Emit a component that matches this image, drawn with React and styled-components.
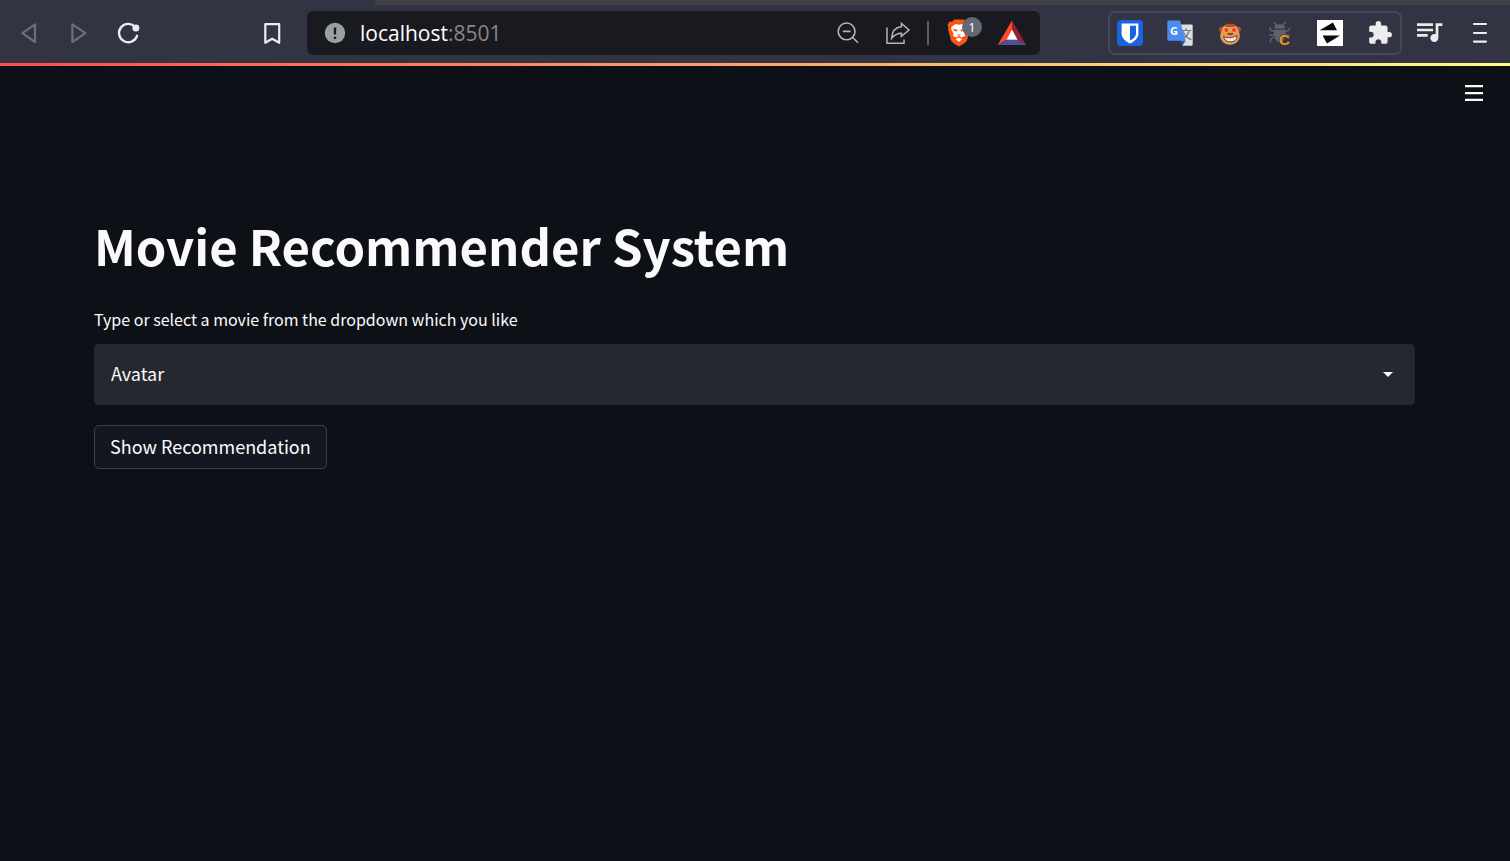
import React, { useState } from 'react';
import styled, { createGlobalStyle } from 'styled-components';
import { MdExtension } from 'react-icons/md';

const Color = {
  CHROME: '#323443',
  STRIP: '#403e47',
  FIELD: '#191a1f',
  ICON: '#ececec',
  ICON_MUTED: '#b4b4b8',
  ICON_DISABLED: '#6d6e76',
  PAGE: '#0d1117',
  TEXT: '#fafafa',
};

const BackIcon = () => (
  <svg width="24" height="24" fill="none" stroke={ Color.ICON_DISABLED } strokeWidth="2.2" strokeLinejoin="round">
    <path d="M5.4 12.2 L18 3.4 V21 Z" />
  </svg>
);

const ForwardIcon = () => (
  <svg width="24" height="24" fill="none" stroke={ Color.ICON_DISABLED } strokeWidth="2.2" strokeLinejoin="round">
    <path d="M18.4 12.2 L5.4 3.4 V21 Z" />
  </svg>
);

const ReloadIcon = () => (
  <svg width="24" height="24" fill="none" stroke={ Color.ICON } strokeWidth="2.4" strokeLinecap="round">
    <path d="M20 14.8 A9.2 9.2 0 1 1 17.6 5.4" />
    <circle cx="18.9" cy="7" r="3.5" fill={ Color.ICON } stroke="none" />
  </svg>
);

const BookmarkIcon = () => (
  <svg width="24" height="24" fill="none" stroke={ Color.ICON } strokeWidth="2.2" strokeLinejoin="round">
    <path d="M5.3 3.2 H19.2 V21.8 L12.2 17.8 L5.3 21.8 Z" />
  </svg>
);

const InfoIcon = () => (
  <svg width="22" height="22" aria-hidden="true">
    <circle cx="11" cy="11" r="10.2" fill="#9b9ea4" />
    <path d="M11 5.5 V12.5 M11 14.8 V17" stroke={ Color.FIELD } strokeWidth="2.4" />
  </svg>
);

const ZoomOutIcon = () => (
  <svg width="24" height="24" fill="none" stroke={ Color.ICON_MUTED } strokeWidth="1.6">
    <circle cx="10.6" cy="10.4" r="8.4" />
    <path d="M6.8 10.4 H14.6 M16.4 16.2 L22 21.8" />
  </svg>
);

const ShareIcon = () => (
  <svg width="26" height="24" fill="none" stroke={ Color.ICON_MUTED } strokeWidth="1.5">
    <path d="M2 6.6 V22.3 H19 V18.4" />
    <path d="M6.6 17.4 C7 10.6 10 6.4 16.4 5.8 V2.4 L24 9 L16.4 15.4 V12.2 C12 12.2 9.4 13.6 6.6 17.4 Z" />
  </svg>
);

const LionIcon = () => (
  <svg width="24" height="28" viewBox="0 0 24 28">
    <path d="M7.2 0.6 H16.8 L18.8 2.8 L21.6 2.6 L23.4 6 L22.6 8.6 L23 10 L20.2 20.8 C19.6 22.6 18.4 23.8 12 27.6 C5.6 23.8 4.4 22.6 3.8 20.8 L1 10 L1.4 8.6 L0.6 6 L2.4 2.6 L5.2 2.8 Z" fill="#fb5413" />
    <path d="M8.6 5 L12 5.8 L15.4 5 L19.2 7.6 L20 9.8 L17.4 14.4 L18 17 L14.6 18.6 L13.2 17.4 L12 17 L10.8 17.4 L9.4 18.6 L6 17 L6.6 14.4 L4 9.8 L4.8 7.6 Z M12 18.4 L15.4 20.2 L12 22.8 L8.6 20.2 Z" fill="#fff" />
    <path d="M6 9.8 L10.6 10.8 L10 12.4 L7.4 12 Z M18 9.8 L13.4 10.8 L14 12.4 L16.6 12 Z M10 15.4 H14 L12 17 Z" fill="#fb5413" />
  </svg>
);

const TriangleIcon = () => (
  <svg width="30" height="26" viewBox="0 0 30 26">
    <path d="M15 0.6 L0.6 25 L9.4 19.8 L15 9.6 Z" fill="#ff4a24" />
    <path d="M15 0.6 L29.4 25 L20.6 19.8 L15 9.6 Z" fill="#98202f" />
    <path d="M0.6 25 H29.4 L20.6 19.8 H9.4 Z" fill="#4c5196" />
    <path d="M15 9.6 L20.6 19.8 H9.4 Z" fill="#fff" />
  </svg>
);

const ShieldIcon = () => (
  <svg width="26" height="26">
    <rect width="26" height="26" rx="4" fill="#1b62dd" />
    <path d="M4.6 3.4 H21.4 V13.4 C21.4 18 17.6 21.2 13 23.4 C8.4 21.2 4.6 18 4.6 13.4 Z" fill="#fff" />
    <path d="M13 5.8 H19 V13.4 C19 16.4 16.4 18.8 13 20.6 Z" fill="#1b62dd" />
  </svg>
);

const TranslateIcon = () => (
  <svg width="26" height="26">
    <path d="M12 4.4 H24.6 Q25.7 4.4 25.7 5.5 V24.6 Q25.7 25.7 24.6 25.7 H15.4 Z" fill="#dedfe1" />
    <text x="13" y="19" fontSize="12" fontFamily="'Noto Sans CJK SC', sans-serif" fill="#5c6672">文</text>
    <path d="M1.4 0.4 H13 L18.6 20.8 H1.4 Q0.3 20.8 0.3 19.7 V1.5 Q0.3 0.4 1.4 0.4 Z" fill="#4a8cf0" />
    <path d="M13.4 20.8 H18.6 L15.4 25.7 Z" fill="#2456c0" />
    <text x="3" y="14.6" fontSize="11" fontWeight="700" fontFamily="'Open Sans', sans-serif" fill="#fff">G</text>
  </svg>
);

const MonkeyIcon = () => (
  <svg width="26" height="26">
    <circle cx="5" cy="9.4" r="2.8" fill="#a9552c" />
    <circle cx="21" cy="9.4" r="2.8" fill="#a9552c" />
    <path d="M8 1.6 L11 3 L12.4 0.8 L14 2.6 L18 1.6 L16 6.4 H9.6 Z" fill="#6c2922" />
    <path d="M13 4 C18 4 21 6.6 21 10.6 C23.2 13.4 23.4 17.4 21.8 19.8 C20 23.2 16.6 24.8 13 24.8 C9.4 24.8 6 23.2 4.2 19.8 C2.6 17.4 2.8 13.4 5 10.6 C5 6.6 8 4 13 4 Z" fill="#e8994f" />
    <path d="M7 5.6 C10 3.6 16 3.6 19 5.6 L17 7 H9 Z" fill="#a9552c" />
    <ellipse cx="9.4" cy="9.8" rx="3.2" ry="2.8" fill="#f3a866" />
    <ellipse cx="17" cy="9.8" rx="3.2" ry="2.8" fill="#f3a866" />
    <circle cx="9.4" cy="10" r="2" fill="#ee3f2c" />
    <circle cx="17" cy="10" r="2" fill="#ee3f2c" />
    <path d="M10.6 13.4 L12.2 14.4 L13.2 13.6 L14.2 14.4 L15.8 13.4" fill="none" stroke="#7a3420" strokeWidth="1.3" />
    <path d="M6.6 16.6 C10 18.4 16 18 20 15.6 C20 20 17.4 21.8 14 21.8 C10 21.8 7.6 20.4 6.6 16.6 Z" fill="#fff" stroke="#54251a" strokeWidth="0.9" />
    <path d="M10 18.2 V20.8 M13.4 18.2 V21.4 M16.6 17.6 V20.8" stroke="#b79a88" strokeWidth="0.6" />
  </svg>
);

const BugIcon = () => (
  <svg width="26" height="26">
    <g fill="none" stroke="#60626a" strokeWidth="1.5" strokeLinejoin="round">
      <path d="M6.6 2 L9.6 5.4 M18.6 2 L15.6 5.4" />
      <path d="M2.6 7.2 L4.2 10.6 L8.4 12 M23 7.2 L21.4 10.6 L17 12" />
      <path d="M2 15 H8 M6.8 17 L3.8 19 L3.4 23 M17 15 H23" />
    </g>
    <path d="M7 8.6 C7.6 5.4 10 4.2 12.7 4.2 C15.4 4.2 17.8 5.4 18.4 8.6 Z" fill="#60626a" />
    <path d="M6.8 9.8 H18.6 C19 15.6 17.4 22.6 12.7 22.6 C8 22.6 6.4 15.6 6.8 9.8 Z" fill="#60626a" />
    <text x="12" y="25" fontSize="15" fontWeight="700" fontFamily="'Liberation Sans', sans-serif" fill="#f0981b" stroke={ Color.CHROME } strokeWidth="1" paintOrder="stroke">C</text>
  </svg>
);

const SorterIcon = () => (
  <svg width="26" height="26">
    <rect width="26" height="26" fill="#fff" />
    <path d="M2.6 10.2 L16 2.6 L20 10.2 Z M5.6 15.6 H23 L10 23.4 Z" fill="#0b0b0b" />
  </svg>
);

const PlaylistIcon = () => (
  <svg width="26" height="22" viewBox="3 5 19.5 16.5" fill={ Color.ICON }>
    <path d="M15 6H3v2h12V6zm0 4H3v2h12v-2zM3 16h8v-2H3v2zM17 6v8.18c-.31-.11-.65-.18-1-.18-1.66 0-3 1.34-3 3s1.34 3 3 3 3-1.34 3-3V8h3V6h-5z" />
  </svg>
);

const MenuIcon = () => (
  <svg width="16" height="22" stroke={ Color.ICON } strokeWidth="2.2" strokeLinecap="round">
    <path d="M2 2 H14 M2 11 H14 M2 19.6 H14" />
  </svg>
);

const AppMenuIcon = () => (
  <svg width="18" height="16" fill={ Color.TEXT }>
    <path d="M0 0 H18 V2.2 H0 Z M0 7 H18 V9.2 H0 Z M0 13.8 H18 V16 H0 Z" />
  </svg>
);

const extensions = [
  { name: 'Password manager', icon: <ShieldIcon /> },
  { name: 'Translate', icon: <TranslateIcon /> },
  { name: 'Monkey', icon: <MonkeyIcon /> },
  { name: 'Bug', icon: <BugIcon /> },
  { name: 'Sorter', icon: <SorterIcon /> },
  { name: 'Extensions', icon: <MdExtension size={ 26 } /> },
];

const movies = ['Avatar', 'Spectre', 'The Dark Knight Rises', 'John Carter', 'Tangled'];

const App = () => {
  const [movie, setMovie] = useState(movies[0]);

  return (
    <Page>
      <GlobalStyle />
      <Browser>
        <TabStrip />
        <Toolbar>
          <ToolButton aria-label="Back" disabled><BackIcon /></ToolButton>
          <ToolButton aria-label="Forward" disabled><ForwardIcon /></ToolButton>
          <ToolButton aria-label="Reload"><ReloadIcon /></ToolButton>
          <BookmarkButton aria-label="Bookmark this page"><BookmarkIcon /></BookmarkButton>
          <AddressBar>
            <InfoIcon />
            <Address role="textbox" aria-label="Address" tabIndex={ 0 }>localhost<Port>:8501</Port></Address>
            <ToolButton aria-label="Zoom"><ZoomOutIcon /></ToolButton>
            <ToolButton aria-label="Share"><ShareIcon /></ToolButton>
            <Divider />
            <ShieldsButton aria-label="Shields">
              <LionIcon />
              <Badge>1</Badge>
            </ShieldsButton>
            <ToolButton aria-label="Rewards"><TriangleIcon /></ToolButton>
          </AddressBar>
          <Extensions>
            { extensions.map(({ name, icon }) => (
              <ExtensionButton key={ name } aria-label={ name }>{ icon }</ExtensionButton>
            )) }
          </Extensions>
          <ToolButton aria-label="Media"><PlaylistIcon /></ToolButton>
          <ToolButton aria-label="Menu"><MenuIcon /></ToolButton>
        </Toolbar>
      </Browser>
      <Decoration />
      <AppHeader>
        <AppMenuButton aria-label="App menu"><AppMenuIcon /></AppMenuButton>
      </AppHeader>
      <Main>
        <Title>Movie Recommender System</Title>
        <Label htmlFor="movie">Type or select a movie from the dropdown which you like</Label>
        <SelectWrap>
          <Select id="movie" value={ movie } onChange={ e => setMovie(e.target.value) }>
            { movies.map(name => <option key={ name }>{ name }</option>) }
          </Select>
          <Caret width="10" height="5" viewBox="0 0 10 5">
            <path d="M0 0 H10 L5 5 Z" fill={ Color.TEXT } />
          </Caret>
        </SelectWrap>
        <ShowButton>Show Recommendation</ShowButton>
      </Main>
    </Page>
  );
};

export default App;

const GlobalStyle = createGlobalStyle`
  * {
    box-sizing: border-box;
  }

  body {
    margin: 0;
    background-color: ${ Color.PAGE };
  }

  svg {
    display: block;
    flex-shrink: 0;
    overflow: visible;
  }
`

const Page = styled.div`
  display: flex;
  flex-direction: column;
  min-height: 100vh;
  color: ${ Color.TEXT };
  font-family: "Noto Sans CJK JP", "Noto Sans", sans-serif;
`

const Browser = styled.header`
  background-color: ${ Color.CHROME };
`

const TabStrip = styled.div`
  margin-left: 375px;
  height: 5px;
  background-color: ${ Color.STRIP };
`

const Toolbar = styled.div`
  display: flex;
  align-items: center;
  padding: 6px 5px 8px 4px;
`

const ToolButton = styled.button`
  display: flex;
  align-items: center;
  justify-content: center;
  flex-shrink: 0;
  border: 0;
  padding: 0;
  width: 50px;
  height: 44px;
  background: none;
  cursor: pointer;
`

const BookmarkButton = styled(ToolButton)`
  margin: 0 10px 0 93px;
`

const AddressBar = styled.div`
  display: flex;
  align-items: center;
  flex: 1;
  min-width: 0;
  border-radius: 6px;
  padding: 0 3px 0 17px;
  height: 44px;
  background-color: ${ Color.FIELD };
`

const Address = styled.div`
  flex: 1;
  margin-left: 14px;
  line-height: 44px;
  font-family: "Open Sans", "Noto Sans", sans-serif;
  font-size: 21px;
  color: #fff;
  white-space: nowrap;
`

const Port = styled.span`
  color: #87858c;
`

const Divider = styled.span`
  margin: 0 5px 0 4px;
  width: 2px;
  height: 24px;
  background-color: #5f5c64;
`

const ShieldsButton = styled(ToolButton)`
  position: relative;
  margin-right: 3px;
`

const Badge = styled.span`
  position: absolute;
  top: 6px;
  right: 2px;
  border-radius: 10px;
  width: 20px;
  height: 20px;
  line-height: 20px;
  background-color: #656775;
  font-family: "Open Sans", sans-serif;
  font-size: 13px;
  text-align: center;
  color: #fff;
`

const Extensions = styled.div`
  display: flex;
  align-items: center;
  gap: 24px;
  border: 2px solid #454754;
  border-radius: 7px;
  margin: 0 3px 0 68px;
  padding: 0 7px;
  height: 44px;
`

const ExtensionButton = styled(ToolButton)`
  width: 26px;
  height: 26px;
  color: ${ Color.ICON };
`

const Decoration = styled.div`
  height: 3px;
  background-image: linear-gradient(90deg, #ff4b4b, #fffd80);
`

const AppHeader = styled.div`
  display: flex;
  justify-content: flex-end;
  padding: 5px 14px;
`

const AppMenuButton = styled(ToolButton)`
  width: 44px;
`

const Main = styled.main`
  display: flex;
  flex-direction: column;
  align-items: flex-start;
  padding: 91px 95px 50px 94px;
`

const Title = styled.h1`
  margin: 0 0 28px;
  line-height: 68px;
  font-weight: 700;
  font-size: 49px;
`

const Label = styled.label`
  margin-bottom: 13px;
  line-height: 24px;
  font-size: 16px;
`

const SelectWrap = styled.div`
  display: grid;
  align-items: center;
  margin-bottom: 20px;
  width: 100%;
`

const Select = styled.select`
  grid-area: 1 / 1;
  appearance: none;
  border: 0;
  border-radius: 5px;
  padding: 0 40px 4px 17px;
  width: 100%;
  height: 61px;
  background-color: #262830;
  font-family: inherit;
  font-size: 18px;
  color: inherit;
`

const Caret = styled.svg`
  grid-area: 1 / 1;
  justify-self: end;
  margin-right: 22px;
  pointer-events: none;
`

const ShowButton = styled.button`
  border: 1px solid #3e4047;
  border-radius: 5px;
  padding: 0 15px 2px;
  height: 44px;
  background-color: #131720;
  font-family: inherit;
  font-size: 18px;
  color: inherit;
  cursor: pointer;
`
